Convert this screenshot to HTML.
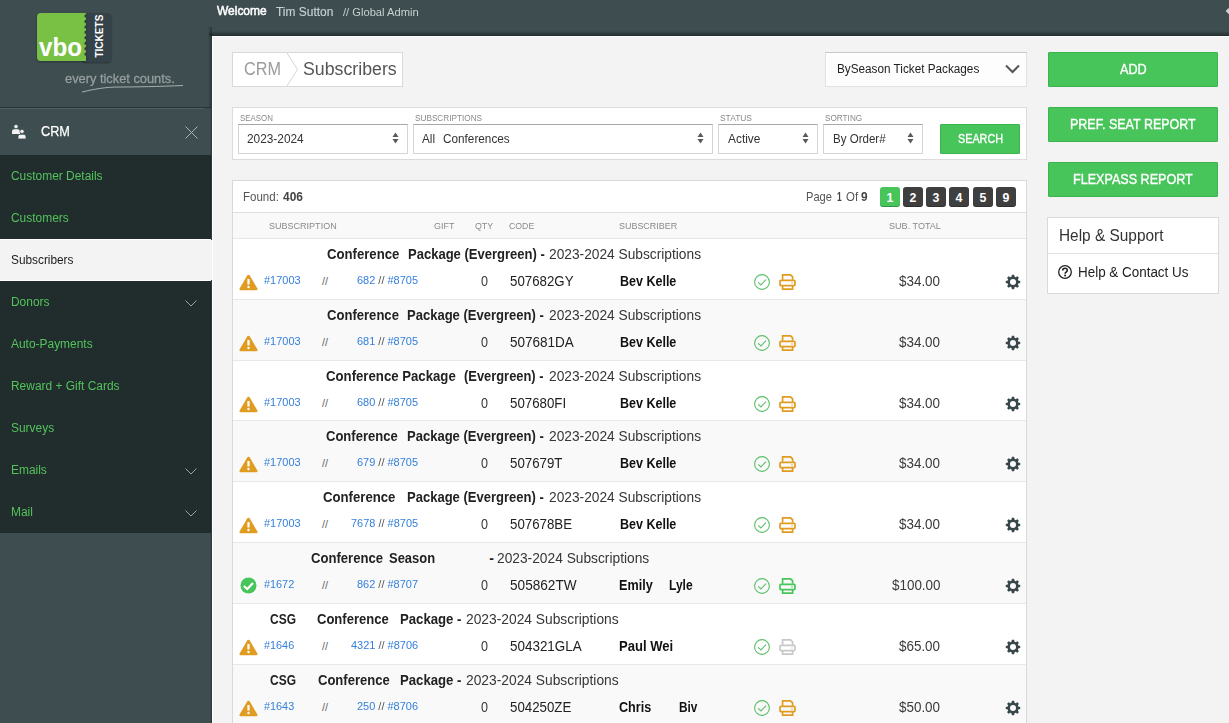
<!DOCTYPE html>
<html><head><meta charset="utf-8"><title>Subscribers</title>
<style>
html,body{margin:0;padding:0;width:1229px;height:723px;overflow:hidden;background:#3d4d50;}
body{position:relative;font-family:"Liberation Sans",sans-serif;}
.t{position:absolute;line-height:1;white-space:nowrap;}
.b{position:absolute;}
</style></head><body>
<div class="b" style="left:0px;top:0px;width:1229px;height:723px;background:#3d4d50"></div>
<div class="t" style="left:217.20px;top:6.00px;font-size:11.92px;color:#ffffff;font-weight:400;transform:scaleX(1.0050);transform-origin:0 0;-webkit-text-stroke:0.5px #fff;">Welcome</div>
<div class="t" style="left:276.20px;top:6.00px;font-size:12.50px;color:#c8d2d4;font-weight:400;transform:scaleX(0.9554);transform-origin:0 0;-webkit-text-stroke:0.15px #c8d2d4;">Tim Sutton</div>
<div class="t" style="left:343.40px;top:7.00px;font-size:11.34px;color:#c9d1d1;font-weight:400;transform:scaleX(0.9847);transform-origin:0 0;">// Global Admin</div>
<svg class="b" style="left:1225px;top:7px" width="4" height="8" viewBox="0 0 4 8"><path d="M4,0.8 L0.6,4 L4,7.2 z" fill="#c9d0d6"/></svg>
<svg class="b" style="left:30px;top:5px" width="90" height="65" viewBox="0 0 90 65">
<defs><filter id="sh" x="-20%" y="-20%" width="140%" height="140%"><feDropShadow dx="0" dy="1" stdDeviation="1" flood-color="#000" flood-opacity="0.35"/></filter></defs>
<rect x="52" y="8" width="29" height="49" rx="4" fill="#34434a" filter="url(#sh)"/>
<path d="M11,8 H56 V9.30 A1.7,1.7 0 0 0 56,12.70 V14.75 A1.7,1.7 0 0 0 56,18.15 V20.20 A1.7,1.7 0 0 0 56,23.60 V25.65 A1.7,1.7 0 0 0 56,29.05 V31.10 A1.7,1.7 0 0 0 56,34.50 V36.55 A1.7,1.7 0 0 0 56,39.95 V42.00 A1.7,1.7 0 0 0 56,45.40 V47.45 A1.7,1.7 0 0 0 56,50.85 V56 H11 a4,4 0 0 1 -4,-4 V12 a4,4 0 0 1 4,-4 z" fill="#78c144" filter="url(#sh)"/>
<text x="9.1" y="50.9" font-family="Liberation Sans" font-weight="700" font-size="26.5" fill="#fff" textLength="43" lengthAdjust="spacingAndGlyphs">vbo</text>
<text transform="translate(73.2,52.6) rotate(-90)" font-family="Liberation Sans" font-weight="700" font-size="11.6" fill="#fff" textLength="43" lengthAdjust="spacingAndGlyphs">TICKETS</text>
</svg>
<div class="t" style="left:65.30px;top:72.00px;font-size:13.20px;color:#959e9e;font-weight:400;transform:scaleX(0.9727);transform-origin:0 0;-webkit-text-stroke:0.3px #959e9e;">every ticket counts.</div>
<svg class="b" style="left:80px;top:84px" width="105" height="10" viewBox="0 0 105 10"><path d="M2,8 C15,5 25,3 40,3 S80,2.5 103,1.5" stroke="#a9b0b0" stroke-width="1" fill="none"/></svg>
<div class="b" style="left:0px;top:107px;width:211px;height:1px;background:rgba(0,0,0,0.3)"></div>
<div class="b" style="left:0px;top:108px;width:204px;height:1px;background:#4f5f62"></div>
<svg class="b" style="left:10px;top:122px" width="20" height="20" viewBox="0 0 20 20" fill="#f2f2f2">
<circle cx="6" cy="4.6" r="2.1" stroke="#3d4d50" stroke-width="0.6"/><path d="M2,12 v-2.5 q0,-2.2 2.2,-2.2 h3.6 q2.2,0 2.2,2.2 v2.5 z"/>
<circle cx="12" cy="9.5" r="2.1" stroke="#3d4d50" stroke-width="0.6"/><path d="M8,17 v-2.5 q0,-2.2 2.2,-2.2 h3.6 q2.2,0 2.2,2.2 v2.5 z" stroke="#3d4d50" stroke-width="0.8"/>
</svg>
<div class="t" style="left:41.00px;top:124.00px;font-size:14.53px;color:#ffffff;font-weight:400;transform:scaleX(0.8762);transform-origin:0 0;-webkit-text-stroke:0.25px #fff;">CRM</div>
<svg class="b" style="left:185px;top:126px" width="13" height="13" viewBox="0 0 13 13"><path d="M0.5,0.5 L12.5,12.5 M12.5,0.5 L0.5,12.5" stroke="#aab2b2" stroke-width="1"/></svg>
<div class="b" style="left:0px;top:155px;width:211px;height:378px;background:#212c2d"></div>
<div class="t" style="left:11.40px;top:169.00px;font-size:13.08px;color:#53c35c;font-weight:400;transform:scaleX(0.9131);transform-origin:0 0;">Customer Details</div>
<div class="t" style="left:11.40px;top:211.00px;font-size:13.08px;color:#53c35c;font-weight:400;transform:scaleX(0.9131);transform-origin:0 0;">Customers</div>
<div class="b" style="left:0px;top:239px;width:211px;height:42px;background:#f3f3f3;border-top:1px solid #fff;border-bottom:1px solid #fff;box-sizing:border-box"></div>
<div class="t" style="left:11.40px;top:253.00px;font-size:13.08px;color:#1a1a1a;font-weight:400;transform:scaleX(0.9049);transform-origin:0 0;">Subscribers</div>
<div class="t" style="left:11.40px;top:295.00px;font-size:13.08px;color:#53c35c;font-weight:400;transform:scaleX(0.9131);transform-origin:0 0;">Donors</div>
<svg class="b" style="left:185px;top:300px" width="12" height="7" viewBox="0 0 12 7"><path d="M0.5,0.5 L6,6 L11.5,0.5" stroke="#9aa2a2" stroke-width="1" fill="none"/></svg>
<div class="t" style="left:11.40px;top:337.00px;font-size:13.08px;color:#53c35c;font-weight:400;transform:scaleX(0.9131);transform-origin:0 0;">Auto-Payments</div>
<div class="t" style="left:11.40px;top:379.00px;font-size:13.08px;color:#53c35c;font-weight:400;transform:scaleX(0.9131);transform-origin:0 0;">Reward + Gift Cards</div>
<div class="t" style="left:11.40px;top:421.00px;font-size:13.08px;color:#53c35c;font-weight:400;transform:scaleX(0.9131);transform-origin:0 0;">Surveys</div>
<div class="t" style="left:11.40px;top:463.00px;font-size:13.08px;color:#53c35c;font-weight:400;transform:scaleX(0.9131);transform-origin:0 0;">Emails</div>
<svg class="b" style="left:185px;top:468px" width="12" height="7" viewBox="0 0 12 7"><path d="M0.5,0.5 L6,6 L11.5,0.5" stroke="#9aa2a2" stroke-width="1" fill="none"/></svg>
<div class="t" style="left:11.40px;top:505.00px;font-size:13.08px;color:#53c35c;font-weight:400;transform:scaleX(0.9131);transform-origin:0 0;">Mail</div>
<svg class="b" style="left:185px;top:510px" width="12" height="7" viewBox="0 0 12 7"><path d="M0.5,0.5 L6,6 L11.5,0.5" stroke="#9aa2a2" stroke-width="1" fill="none"/></svg>
<div class="b" style="left:208px;top:27px;width:4px;height:81px;background:linear-gradient(to right, rgba(0,0,0,0), rgba(0,0,0,0.32))"></div>
<div class="b" style="left:210px;top:108px;width:2px;height:615px;background:linear-gradient(to right, rgba(0,0,0,0), rgba(0,0,0,0.32))"></div>
<div class="b" style="left:210px;top:240px;width:2px;height:40px;background:#f3f3f3"></div>
<div class="b" style="left:209px;top:31px;width:1020px;height:5px;background:linear-gradient(to bottom, rgba(0,0,0,0), rgba(0,0,0,0.42))"></div>
<div class="b" style="left:212px;top:36px;width:1017px;height:687px;background:#f3f3f3;border-left:1px solid #fff;border-top:1px solid #fff;box-sizing:border-box"></div>
<div class="b" style="left:232px;top:52px;width:171px;height:35px;background:#fff;border:1px solid #d9d9d9;box-sizing:border-box"></div>
<svg class="b" style="left:286px;top:53px" width="13" height="33" viewBox="0 0 13 33"><path d="M1,0 L11.5,16.5 L1,33" stroke="#d5d5d5" stroke-width="1" fill="none"/></svg>
<div class="t" style="left:243.70px;top:60.00px;font-size:18.90px;color:#9c9c9c;font-weight:400;transform:scaleX(0.8600);transform-origin:0 0;">CRM</div>
<div class="t" style="left:303.00px;top:60.00px;font-size:18.90px;color:#555;font-weight:400;transform:scaleX(0.9392);transform-origin:0 0;">Subscribers</div>
<div class="b" style="left:825px;top:52px;width:202px;height:35px;background:#fdfdfd;border:1px solid #dde3e6;border-top-color:#c9c9c9;box-sizing:border-box"></div>
<div class="t" style="left:836.50px;top:62.00px;font-size:13.52px;color:#222;font-weight:400;transform:scaleX(0.8687);transform-origin:0 0;">BySeason Ticket Packages</div>
<svg class="b" style="left:1005px;top:64px" width="15" height="10" viewBox="0 0 15 10"><path d="M1,1.5 L7.5,8 L14,1.5" stroke="#555" stroke-width="2" fill="none"/></svg>
<div class="b" style="left:232px;top:107px;width:795px;height:53px;background:#fff;border:1px solid #dcdcdc;box-sizing:border-box"></div>
<div class="t" style="left:240.00px;top:113.00px;font-size:9.74px;color:#8a8a8a;font-weight:400;transform:scaleX(0.8130);transform-origin:0 0;">SEASON</div>
<div class="b" style="left:238px;top:124px;width:170px;height:30px;background:#fff;border:1px solid #d5d5d5;border-top:1px solid #a8a8a8;box-sizing:border-box"></div>
<svg class="b" style="left:391.5px;top:132px" width="7" height="12" viewBox="0 0 7 12"><path d="M3.5,0.5 L6.5,5 H0.5 z M0.5,7 H6.5 L3.5,11.5 z" fill="#5a5a5a"/></svg>
<div class="t" style="left:415.20px;top:113.00px;font-size:9.74px;color:#8a8a8a;font-weight:400;transform:scaleX(0.8436);transform-origin:0 0;">SUBSCRIPTIONS</div>
<div class="b" style="left:413px;top:124px;width:300px;height:30px;background:#fff;border:1px solid #d5d5d5;border-top:1px solid #a8a8a8;box-sizing:border-box"></div>
<svg class="b" style="left:696.5px;top:132px" width="7" height="12" viewBox="0 0 7 12"><path d="M3.5,0.5 L6.5,5 H0.5 z M0.5,7 H6.5 L3.5,11.5 z" fill="#5a5a5a"/></svg>
<div class="t" style="left:720.20px;top:113.00px;font-size:9.74px;color:#8a8a8a;font-weight:400;transform:scaleX(0.8656);transform-origin:0 0;">STATUS</div>
<div class="b" style="left:718px;top:124px;width:100px;height:30px;background:#fff;border:1px solid #d5d5d5;border-top:1px solid #a8a8a8;box-sizing:border-box"></div>
<svg class="b" style="left:801.5px;top:132px" width="7" height="12" viewBox="0 0 7 12"><path d="M3.5,0.5 L6.5,5 H0.5 z M0.5,7 H6.5 L3.5,11.5 z" fill="#5a5a5a"/></svg>
<div class="t" style="left:824.90px;top:113.00px;font-size:9.74px;color:#8a8a8a;font-weight:400;transform:scaleX(0.8418);transform-origin:0 0;">SORTING</div>
<div class="b" style="left:823px;top:124px;width:100px;height:30px;background:#fff;border:1px solid #d5d5d5;border-top:1px solid #a8a8a8;box-sizing:border-box"></div>
<svg class="b" style="left:906.5px;top:132px" width="7" height="12" viewBox="0 0 7 12"><path d="M3.5,0.5 L6.5,5 H0.5 z M0.5,7 H6.5 L3.5,11.5 z" fill="#5a5a5a"/></svg>
<div class="t" style="left:247.30px;top:133.00px;font-size:12.65px;color:#333;font-weight:400;transform:scaleX(0.9377);transform-origin:0 0;">2023-2024</div>
<div class="t" style="left:422.10px;top:133.00px;font-size:12.65px;color:#333;font-weight:400;transform:scaleX(0.9253);transform-origin:0 0;">All</div>
<div class="t" style="left:442.60px;top:133.00px;font-size:12.65px;color:#333;font-weight:400;transform:scaleX(0.9303);transform-origin:0 0;">Conferences</div>
<div class="t" style="left:727.70px;top:133.00px;font-size:12.65px;color:#333;font-weight:400;transform:scaleX(0.9410);transform-origin:0 0;">Active</div>
<div class="t" style="left:832.50px;top:133.00px;font-size:12.65px;color:#333;font-weight:400;transform:scaleX(0.9128);transform-origin:0 0;">By Order#</div>
<div class="b" style="left:940px;top:124px;width:80px;height:30px;background:#47c45a;border:1px solid #3db350;box-sizing:border-box;border-radius:1px"></div>
<div class="t" style="left:957.50px;top:133.00px;font-size:12.94px;color:#fff;font-weight:400;transform:scaleX(0.8346);transform-origin:0 0;-webkit-text-stroke:0.35px #fff;">SEARCH</div>
<div class="b" style="left:1048px;top:52px;width:170px;height:35px;background:#47c45a;border:1px solid #3db350;box-sizing:border-box;border-radius:1px"></div>
<div class="t" style="left:1119.70px;top:62.00px;font-size:14.10px;color:#fff;font-weight:400;transform:scaleX(0.8971);transform-origin:0 0;-webkit-text-stroke:0.35px #fff;">ADD</div>
<div class="b" style="left:1048px;top:107px;width:170px;height:35px;background:#47c45a;border:1px solid #3db350;box-sizing:border-box;border-radius:1px"></div>
<div class="t" style="left:1070.30px;top:117.00px;font-size:14.10px;color:#fff;font-weight:400;transform:scaleX(0.8871);transform-origin:0 0;-webkit-text-stroke:0.35px #fff;">PREF. SEAT REPORT</div>
<div class="b" style="left:1048px;top:162px;width:170px;height:35px;background:#47c45a;border:1px solid #3db350;box-sizing:border-box;border-radius:1px"></div>
<div class="t" style="left:1073.20px;top:172.00px;font-size:14.10px;color:#fff;font-weight:400;transform:scaleX(0.8924);transform-origin:0 0;-webkit-text-stroke:0.35px #fff;">FLEXPASS REPORT</div>
<div class="b" style="left:1047px;top:217px;width:172px;height:77px;background:#fff;border:1px solid #dadada;box-sizing:border-box"></div>
<div class="b" style="left:1048px;top:253px;width:170px;height:1px;background:#e0e0e0"></div>
<div class="t" style="left:1058.50px;top:228.00px;font-size:16.72px;color:#333;font-weight:400;transform:scaleX(0.9218);transform-origin:0 0;">Help &amp; Support</div>
<svg class="b" style="left:1058px;top:265px" width="14" height="14" viewBox="0 0 14 14"><circle cx="7" cy="7" r="6.3" stroke="#222" stroke-width="1.3" fill="none"/><path d="M4.7,5.5 q0,-2.3 2.3,-2.3 q2.3,0 2.3,2.1 q0,1.2 -1.3,1.9 q-0.9,0.5 -0.9,1.6" stroke="#222" stroke-width="1.6" fill="none"/><circle cx="7.1" cy="10.6" r="1" fill="#222"/></svg>
<div class="t" style="left:1078.40px;top:265.00px;font-size:14.53px;color:#222;font-weight:400;transform:scaleX(0.9250);transform-origin:0 0;">Help &amp; Contact Us</div>
<div class="b" style="left:232px;top:180px;width:795px;height:543px;background:#fff;border:1px solid #d9d9d9;border-bottom:none;box-sizing:border-box"></div>
<div class="b" style="left:233px;top:212px;width:793px;height:1px;background:#dedede"></div>
<div class="b" style="left:233px;top:213px;width:793px;height:25px;background:#f9f9f9"></div>
<div class="b" style="left:233px;top:238px;width:793px;height:1px;background:#e6e6e6"></div>
<div class="t" style="left:243.30px;top:191.00px;font-size:12.65px;color:#555;font-weight:400;transform:scaleX(0.9120);transform-origin:0 0;">Found:</div>
<div class="t" style="left:282.60px;top:191.00px;font-size:12.65px;color:#444;font-weight:700;transform:scaleX(0.9435);transform-origin:0 0;">406</div>
<div class="t" style="left:806.20px;top:191.00px;font-size:12.79px;color:#555;font-weight:400;transform:scaleX(0.8705);transform-origin:0 0;">Page</div>
<div class="t" style="left:836.50px;top:191.00px;font-size:12.79px;color:#444;font-weight:700;transform:scaleX(0.6609);transform-origin:0 0;">1</div>
<div class="t" style="left:845.90px;top:191.00px;font-size:12.79px;color:#555;font-weight:400;transform:scaleX(0.8941);transform-origin:0 0;">Of</div>
<div class="t" style="left:860.80px;top:191.00px;font-size:12.79px;color:#444;font-weight:700;transform:scaleX(0.9281);transform-origin:0 0;">9</div>
<div class="b" style="left:880px;top:187px;width:20px;height:20px;background:#47c45a;border-radius:3px;box-shadow:inset 0 -1px 0 rgba(0,0,0,0.25)"></div>
<div class="t" style="left:886.57px;top:192.00px;font-size:12.35px;color:#fff;font-weight:700;">1</div>
<div class="b" style="left:903px;top:187px;width:20px;height:20px;background:#3f3f3f;border-radius:3px;box-shadow:inset 0 -1px 0 rgba(0,0,0,0.25)"></div>
<div class="t" style="left:909.57px;top:192.00px;font-size:12.35px;color:#fff;font-weight:700;">2</div>
<div class="b" style="left:926px;top:187px;width:20px;height:20px;background:#3f3f3f;border-radius:3px;box-shadow:inset 0 -1px 0 rgba(0,0,0,0.25)"></div>
<div class="t" style="left:932.57px;top:192.00px;font-size:12.35px;color:#fff;font-weight:700;">3</div>
<div class="b" style="left:949px;top:187px;width:20px;height:20px;background:#3f3f3f;border-radius:3px;box-shadow:inset 0 -1px 0 rgba(0,0,0,0.25)"></div>
<div class="t" style="left:955.57px;top:192.00px;font-size:12.35px;color:#fff;font-weight:700;">4</div>
<div class="b" style="left:973px;top:187px;width:20px;height:20px;background:#3f3f3f;border-radius:3px;box-shadow:inset 0 -1px 0 rgba(0,0,0,0.25)"></div>
<div class="t" style="left:979.57px;top:192.00px;font-size:12.35px;color:#fff;font-weight:700;">5</div>
<div class="b" style="left:996px;top:187px;width:20px;height:20px;background:#3f3f3f;border-radius:3px;box-shadow:inset 0 -1px 0 rgba(0,0,0,0.25)"></div>
<div class="t" style="left:1002.57px;top:192.00px;font-size:12.35px;color:#fff;font-weight:700;">9</div>
<div class="t" style="left:269.30px;top:221.00px;font-size:9.74px;color:#8a8a8a;font-weight:400;transform:scaleX(0.9268);transform-origin:0 0;">SUBSCRIPTION</div>
<div class="t" style="left:433.60px;top:221.00px;font-size:9.74px;color:#8a8a8a;font-weight:400;transform:scaleX(0.9200);transform-origin:0 0;">GIFT</div>
<div class="t" style="left:474.90px;top:221.00px;font-size:9.74px;color:#8a8a8a;font-weight:400;transform:scaleX(0.9040);transform-origin:0 0;">QTY</div>
<div class="t" style="left:509.00px;top:221.00px;font-size:9.74px;color:#8a8a8a;font-weight:400;transform:scaleX(0.8957);transform-origin:0 0;">CODE</div>
<div class="t" style="left:618.80px;top:221.00px;font-size:9.74px;color:#8a8a8a;font-weight:400;transform:scaleX(0.9192);transform-origin:0 0;">SUBSCRIBER</div>
<div class="t" style="left:888.50px;top:221.00px;font-size:9.74px;color:#8a8a8a;font-weight:400;transform:scaleX(0.9311);transform-origin:0 0;">SUB. TOTAL</div>
<div class="b" style="left:233px;top:239px;width:793px;height:60px;background:#ffffff"></div>
<div class="b" style="left:233px;top:299px;width:793px;height:1px;background:#e8e8e8"></div>
<div class="t" style="left:327.20px;top:248.00px;font-size:13.95px;color:#222;font-weight:700;transform:scaleX(0.9431);transform-origin:0 0;">Conference</div>
<div class="t" style="left:407.50px;top:248.00px;font-size:13.95px;color:#222;font-weight:700;transform:scaleX(0.9346);transform-origin:0 0;">Package (Evergreen) -</div>
<div class="t" style="left:548.80px;top:248.00px;font-size:13.95px;color:#363636;font-weight:400;transform:scaleX(0.9860);transform-origin:0 0;">2023-2024 Subscriptions</div>
<svg class="b" style="left:239px;top:274px" width="19" height="17" viewBox="0 0 19 17"><path d="M9.5,0.8 Q10.3,0.8 10.8,1.6 L18.4,14.6 Q19,15.9 17.6,16.2 H1.4 Q0,15.9 0.6,14.6 L8.2,1.6 Q8.7,0.8 9.5,0.8 z" fill="#e09c21"/><path d="M9.5,5 V10.5" stroke="#fff" stroke-width="2.2"/><circle cx="9.5" cy="13" r="1.2" fill="#fff"/></svg>
<div class="t" style="left:264.30px;top:275.00px;font-size:11.19px;color:#3580dc;font-weight:400;transform:scaleX(0.9800);transform-origin:0 0;">#17003</div>
<div class="t" style="left:322.00px;top:276.00px;font-size:10.90px;color:#666;font-weight:400;">//</div>
<div class="t" style="left:357.10px;top:275.00px;font-size:11.19px;color:#3580dc;font-weight:400;transform:scaleX(0.9801);transform-origin:0 0;">682 <span style='color:#555'>//</span> #8705</div>
<div class="t" style="left:481.00px;top:274.00px;font-size:14.53px;color:#3a3a3a;font-weight:400;transform:scaleX(0.8662);transform-origin:0 0;">0</div>
<div class="t" style="left:509.70px;top:274.00px;font-size:14.53px;color:#222;font-weight:400;transform:scaleX(0.9150);transform-origin:0 0;">507682GY</div>
<div class="t" style="left:619.60px;top:274.00px;font-size:14.53px;color:#111;font-weight:700;transform:scaleX(0.8619);transform-origin:0 0;">Bev Kelle</div>
<svg class="b" style="left:754px;top:274px" width="17" height="17" viewBox="0 0 17 17"><circle cx="8" cy="8" r="7.4" stroke="#5cbf68" stroke-width="1.1" fill="none"/><path d="M4.2,8.3 L6.9,10.9 L12,5.6" stroke="#5cbf68" stroke-width="1.1" fill="none"/></svg>
<svg class="b" style="left:779px;top:274px" width="17" height="17" viewBox="0 0 17 17"><path d="M3.6,5.8 V0.9 H11.6 L13.6,2.9 V5.8" stroke="#e09c21" stroke-width="1.7" fill="none"/><rect x="1" y="6.3" width="15" height="5.3" rx="1" stroke="#e09c21" stroke-width="1.7" fill="none"/><path d="M3.6,11.6 V15.2 H13.6 V11.6" stroke="#e09c21" stroke-width="1.7" fill="none"/><circle cx="13" cy="9" r="0.7" fill="#e09c21"/></svg>
<div class="t" style="left:899.40px;top:274.00px;font-size:14.53px;color:#3a3a3a;font-weight:400;transform:scaleX(0.9244);transform-origin:0 0;">$34.00</div>
<svg class="b" style="left:1005px;top:274px" width="16" height="16" viewBox="0 0 16 16"><path fill="#37474a" fill-rule="evenodd" d="M6.39,2.74 L6.92,0.78 L9.08,0.78 L9.61,2.74 L10.58,3.14 L12.34,2.13 L13.87,3.66 L12.86,5.42 L13.26,6.39 L15.22,6.92 L15.22,9.08 L13.26,9.61 L12.86,10.58 L13.87,12.34 L12.34,13.87 L10.58,12.86 L9.61,13.26 L9.08,15.22 L6.92,15.22 L6.39,13.26 L5.42,12.86 L3.66,13.87 L2.13,12.34 L3.14,10.58 L2.74,9.61 L0.78,9.08 L0.78,6.92 L2.74,6.39 L3.14,5.42 L2.13,3.66 L3.66,2.13 L5.42,3.14 Z M8,5.0 A3,3 0 1 0 8,11 A3,3 0 1 0 8,5.0 Z"/></svg>
<div class="b" style="left:233px;top:300px;width:793px;height:60px;background:#f9f9f9"></div>
<div class="b" style="left:233px;top:360px;width:793px;height:1px;background:#e8e8e8"></div>
<div class="t" style="left:327.30px;top:309.00px;font-size:13.95px;color:#222;font-weight:700;transform:scaleX(0.9378);transform-origin:0 0;">Conference</div>
<div class="t" style="left:407.00px;top:309.00px;font-size:13.95px;color:#222;font-weight:700;transform:scaleX(0.9346);transform-origin:0 0;">Package (Evergreen) -</div>
<div class="t" style="left:548.80px;top:309.00px;font-size:13.95px;color:#363636;font-weight:400;transform:scaleX(0.9860);transform-origin:0 0;">2023-2024 Subscriptions</div>
<svg class="b" style="left:239px;top:335px" width="19" height="17" viewBox="0 0 19 17"><path d="M9.5,0.8 Q10.3,0.8 10.8,1.6 L18.4,14.6 Q19,15.9 17.6,16.2 H1.4 Q0,15.9 0.6,14.6 L8.2,1.6 Q8.7,0.8 9.5,0.8 z" fill="#e09c21"/><path d="M9.5,5 V10.5" stroke="#fff" stroke-width="2.2"/><circle cx="9.5" cy="13" r="1.2" fill="#fff"/></svg>
<div class="t" style="left:264.30px;top:336.00px;font-size:11.19px;color:#3580dc;font-weight:400;transform:scaleX(0.9800);transform-origin:0 0;">#17003</div>
<div class="t" style="left:322.00px;top:337.00px;font-size:10.90px;color:#666;font-weight:400;">//</div>
<div class="t" style="left:357.10px;top:336.00px;font-size:11.19px;color:#3580dc;font-weight:400;transform:scaleX(0.9801);transform-origin:0 0;">681 <span style='color:#555'>//</span> #8705</div>
<div class="t" style="left:481.00px;top:335.00px;font-size:14.53px;color:#3a3a3a;font-weight:400;transform:scaleX(0.8662);transform-origin:0 0;">0</div>
<div class="t" style="left:509.70px;top:335.00px;font-size:14.53px;color:#222;font-weight:400;transform:scaleX(0.9302);transform-origin:0 0;">507681DA</div>
<div class="t" style="left:619.60px;top:335.00px;font-size:14.53px;color:#111;font-weight:700;transform:scaleX(0.8619);transform-origin:0 0;">Bev Kelle</div>
<svg class="b" style="left:754px;top:335px" width="17" height="17" viewBox="0 0 17 17"><circle cx="8" cy="8" r="7.4" stroke="#5cbf68" stroke-width="1.1" fill="none"/><path d="M4.2,8.3 L6.9,10.9 L12,5.6" stroke="#5cbf68" stroke-width="1.1" fill="none"/></svg>
<svg class="b" style="left:779px;top:335px" width="17" height="17" viewBox="0 0 17 17"><path d="M3.6,5.8 V0.9 H11.6 L13.6,2.9 V5.8" stroke="#e09c21" stroke-width="1.7" fill="none"/><rect x="1" y="6.3" width="15" height="5.3" rx="1" stroke="#e09c21" stroke-width="1.7" fill="none"/><path d="M3.6,11.6 V15.2 H13.6 V11.6" stroke="#e09c21" stroke-width="1.7" fill="none"/><circle cx="13" cy="9" r="0.7" fill="#e09c21"/></svg>
<div class="t" style="left:899.40px;top:335.00px;font-size:14.53px;color:#3a3a3a;font-weight:400;transform:scaleX(0.9244);transform-origin:0 0;">$34.00</div>
<svg class="b" style="left:1005px;top:335px" width="16" height="16" viewBox="0 0 16 16"><path fill="#37474a" fill-rule="evenodd" d="M6.39,2.74 L6.92,0.78 L9.08,0.78 L9.61,2.74 L10.58,3.14 L12.34,2.13 L13.87,3.66 L12.86,5.42 L13.26,6.39 L15.22,6.92 L15.22,9.08 L13.26,9.61 L12.86,10.58 L13.87,12.34 L12.34,13.87 L10.58,12.86 L9.61,13.26 L9.08,15.22 L6.92,15.22 L6.39,13.26 L5.42,12.86 L3.66,13.87 L2.13,12.34 L3.14,10.58 L2.74,9.61 L0.78,9.08 L0.78,6.92 L2.74,6.39 L3.14,5.42 L2.13,3.66 L3.66,2.13 L5.42,3.14 Z M8,5.0 A3,3 0 1 0 8,11 A3,3 0 1 0 8,5.0 Z"/></svg>
<div class="b" style="left:233px;top:361px;width:793px;height:59px;background:#ffffff"></div>
<div class="b" style="left:233px;top:420px;width:793px;height:1px;background:#e8e8e8"></div>
<div class="t" style="left:326.30px;top:370.00px;font-size:13.95px;color:#222;font-weight:700;transform:scaleX(0.9463);transform-origin:0 0;">Conference Package</div>
<div class="t" style="left:464.40px;top:370.00px;font-size:13.95px;color:#222;font-weight:700;transform:scaleX(0.9247);transform-origin:0 0;">(Evergreen) -</div>
<div class="t" style="left:548.80px;top:370.00px;font-size:13.95px;color:#363636;font-weight:400;transform:scaleX(0.9860);transform-origin:0 0;">2023-2024 Subscriptions</div>
<svg class="b" style="left:239px;top:396px" width="19" height="17" viewBox="0 0 19 17"><path d="M9.5,0.8 Q10.3,0.8 10.8,1.6 L18.4,14.6 Q19,15.9 17.6,16.2 H1.4 Q0,15.9 0.6,14.6 L8.2,1.6 Q8.7,0.8 9.5,0.8 z" fill="#e09c21"/><path d="M9.5,5 V10.5" stroke="#fff" stroke-width="2.2"/><circle cx="9.5" cy="13" r="1.2" fill="#fff"/></svg>
<div class="t" style="left:264.30px;top:397.00px;font-size:11.19px;color:#3580dc;font-weight:400;transform:scaleX(0.9800);transform-origin:0 0;">#17003</div>
<div class="t" style="left:322.00px;top:398.00px;font-size:10.90px;color:#666;font-weight:400;">//</div>
<div class="t" style="left:357.10px;top:397.00px;font-size:11.19px;color:#3580dc;font-weight:400;transform:scaleX(0.9801);transform-origin:0 0;">680 <span style='color:#555'>//</span> #8705</div>
<div class="t" style="left:481.00px;top:396.00px;font-size:14.53px;color:#3a3a3a;font-weight:400;transform:scaleX(0.8662);transform-origin:0 0;">0</div>
<div class="t" style="left:509.70px;top:396.00px;font-size:14.53px;color:#222;font-weight:400;transform:scaleX(0.9150);transform-origin:0 0;">507680FI</div>
<div class="t" style="left:619.60px;top:396.00px;font-size:14.53px;color:#111;font-weight:700;transform:scaleX(0.8619);transform-origin:0 0;">Bev Kelle</div>
<svg class="b" style="left:754px;top:396px" width="17" height="17" viewBox="0 0 17 17"><circle cx="8" cy="8" r="7.4" stroke="#5cbf68" stroke-width="1.1" fill="none"/><path d="M4.2,8.3 L6.9,10.9 L12,5.6" stroke="#5cbf68" stroke-width="1.1" fill="none"/></svg>
<svg class="b" style="left:779px;top:396px" width="17" height="17" viewBox="0 0 17 17"><path d="M3.6,5.8 V0.9 H11.6 L13.6,2.9 V5.8" stroke="#e09c21" stroke-width="1.7" fill="none"/><rect x="1" y="6.3" width="15" height="5.3" rx="1" stroke="#e09c21" stroke-width="1.7" fill="none"/><path d="M3.6,11.6 V15.2 H13.6 V11.6" stroke="#e09c21" stroke-width="1.7" fill="none"/><circle cx="13" cy="9" r="0.7" fill="#e09c21"/></svg>
<div class="t" style="left:899.40px;top:396.00px;font-size:14.53px;color:#3a3a3a;font-weight:400;transform:scaleX(0.9244);transform-origin:0 0;">$34.00</div>
<svg class="b" style="left:1005px;top:396px" width="16" height="16" viewBox="0 0 16 16"><path fill="#37474a" fill-rule="evenodd" d="M6.39,2.74 L6.92,0.78 L9.08,0.78 L9.61,2.74 L10.58,3.14 L12.34,2.13 L13.87,3.66 L12.86,5.42 L13.26,6.39 L15.22,6.92 L15.22,9.08 L13.26,9.61 L12.86,10.58 L13.87,12.34 L12.34,13.87 L10.58,12.86 L9.61,13.26 L9.08,15.22 L6.92,15.22 L6.39,13.26 L5.42,12.86 L3.66,13.87 L2.13,12.34 L3.14,10.58 L2.74,9.61 L0.78,9.08 L0.78,6.92 L2.74,6.39 L3.14,5.42 L2.13,3.66 L3.66,2.13 L5.42,3.14 Z M8,5.0 A3,3 0 1 0 8,11 A3,3 0 1 0 8,5.0 Z"/></svg>
<div class="b" style="left:233px;top:421px;width:793px;height:60px;background:#f9f9f9"></div>
<div class="b" style="left:233px;top:481px;width:793px;height:1px;background:#e8e8e8"></div>
<div class="t" style="left:325.60px;top:430.00px;font-size:13.95px;color:#222;font-weight:700;transform:scaleX(0.9352);transform-origin:0 0;">Conference</div>
<div class="t" style="left:407.00px;top:430.00px;font-size:13.95px;color:#222;font-weight:700;transform:scaleX(0.9346);transform-origin:0 0;">Package (Evergreen) -</div>
<div class="t" style="left:548.80px;top:430.00px;font-size:13.95px;color:#363636;font-weight:400;transform:scaleX(0.9860);transform-origin:0 0;">2023-2024 Subscriptions</div>
<svg class="b" style="left:239px;top:456px" width="19" height="17" viewBox="0 0 19 17"><path d="M9.5,0.8 Q10.3,0.8 10.8,1.6 L18.4,14.6 Q19,15.9 17.6,16.2 H1.4 Q0,15.9 0.6,14.6 L8.2,1.6 Q8.7,0.8 9.5,0.8 z" fill="#e09c21"/><path d="M9.5,5 V10.5" stroke="#fff" stroke-width="2.2"/><circle cx="9.5" cy="13" r="1.2" fill="#fff"/></svg>
<div class="t" style="left:264.30px;top:457.00px;font-size:11.19px;color:#3580dc;font-weight:400;transform:scaleX(0.9800);transform-origin:0 0;">#17003</div>
<div class="t" style="left:322.00px;top:458.00px;font-size:10.90px;color:#666;font-weight:400;">//</div>
<div class="t" style="left:357.10px;top:457.00px;font-size:11.19px;color:#3580dc;font-weight:400;transform:scaleX(0.9801);transform-origin:0 0;">679 <span style='color:#555'>//</span> #8705</div>
<div class="t" style="left:481.00px;top:456.00px;font-size:14.53px;color:#3a3a3a;font-weight:400;transform:scaleX(0.8662);transform-origin:0 0;">0</div>
<div class="t" style="left:509.70px;top:456.00px;font-size:14.53px;color:#222;font-weight:400;transform:scaleX(0.9150);transform-origin:0 0;">507679T</div>
<div class="t" style="left:619.60px;top:456.00px;font-size:14.53px;color:#111;font-weight:700;transform:scaleX(0.8619);transform-origin:0 0;">Bev Kelle</div>
<svg class="b" style="left:754px;top:456px" width="17" height="17" viewBox="0 0 17 17"><circle cx="8" cy="8" r="7.4" stroke="#5cbf68" stroke-width="1.1" fill="none"/><path d="M4.2,8.3 L6.9,10.9 L12,5.6" stroke="#5cbf68" stroke-width="1.1" fill="none"/></svg>
<svg class="b" style="left:779px;top:456px" width="17" height="17" viewBox="0 0 17 17"><path d="M3.6,5.8 V0.9 H11.6 L13.6,2.9 V5.8" stroke="#e09c21" stroke-width="1.7" fill="none"/><rect x="1" y="6.3" width="15" height="5.3" rx="1" stroke="#e09c21" stroke-width="1.7" fill="none"/><path d="M3.6,11.6 V15.2 H13.6 V11.6" stroke="#e09c21" stroke-width="1.7" fill="none"/><circle cx="13" cy="9" r="0.7" fill="#e09c21"/></svg>
<div class="t" style="left:899.40px;top:456.00px;font-size:14.53px;color:#3a3a3a;font-weight:400;transform:scaleX(0.9244);transform-origin:0 0;">$34.00</div>
<svg class="b" style="left:1005px;top:456px" width="16" height="16" viewBox="0 0 16 16"><path fill="#37474a" fill-rule="evenodd" d="M6.39,2.74 L6.92,0.78 L9.08,0.78 L9.61,2.74 L10.58,3.14 L12.34,2.13 L13.87,3.66 L12.86,5.42 L13.26,6.39 L15.22,6.92 L15.22,9.08 L13.26,9.61 L12.86,10.58 L13.87,12.34 L12.34,13.87 L10.58,12.86 L9.61,13.26 L9.08,15.22 L6.92,15.22 L6.39,13.26 L5.42,12.86 L3.66,13.87 L2.13,12.34 L3.14,10.58 L2.74,9.61 L0.78,9.08 L0.78,6.92 L2.74,6.39 L3.14,5.42 L2.13,3.66 L3.66,2.13 L5.42,3.14 Z M8,5.0 A3,3 0 1 0 8,11 A3,3 0 1 0 8,5.0 Z"/></svg>
<div class="b" style="left:233px;top:482px;width:793px;height:60px;background:#ffffff"></div>
<div class="b" style="left:233px;top:542px;width:793px;height:1px;background:#e8e8e8"></div>
<div class="t" style="left:323.20px;top:491.00px;font-size:13.95px;color:#222;font-weight:700;transform:scaleX(0.9444);transform-origin:0 0;">Conference</div>
<div class="t" style="left:407.00px;top:491.00px;font-size:13.95px;color:#222;font-weight:700;transform:scaleX(0.9346);transform-origin:0 0;">Package (Evergreen) -</div>
<div class="t" style="left:548.80px;top:491.00px;font-size:13.95px;color:#363636;font-weight:400;transform:scaleX(0.9860);transform-origin:0 0;">2023-2024 Subscriptions</div>
<svg class="b" style="left:239px;top:517px" width="19" height="17" viewBox="0 0 19 17"><path d="M9.5,0.8 Q10.3,0.8 10.8,1.6 L18.4,14.6 Q19,15.9 17.6,16.2 H1.4 Q0,15.9 0.6,14.6 L8.2,1.6 Q8.7,0.8 9.5,0.8 z" fill="#e09c21"/><path d="M9.5,5 V10.5" stroke="#fff" stroke-width="2.2"/><circle cx="9.5" cy="13" r="1.2" fill="#fff"/></svg>
<div class="t" style="left:264.30px;top:518.00px;font-size:11.19px;color:#3580dc;font-weight:400;transform:scaleX(0.9800);transform-origin:0 0;">#17003</div>
<div class="t" style="left:322.00px;top:519.00px;font-size:10.90px;color:#666;font-weight:400;">//</div>
<div class="t" style="left:351.00px;top:518.00px;font-size:11.19px;color:#3580dc;font-weight:400;transform:scaleX(0.9801);transform-origin:0 0;">7678 <span style='color:#555'>//</span> #8705</div>
<div class="t" style="left:481.00px;top:517.00px;font-size:14.53px;color:#3a3a3a;font-weight:400;transform:scaleX(0.8662);transform-origin:0 0;">0</div>
<div class="t" style="left:509.70px;top:517.00px;font-size:14.53px;color:#222;font-weight:400;transform:scaleX(0.9150);transform-origin:0 0;">507678BE</div>
<div class="t" style="left:619.60px;top:517.00px;font-size:14.53px;color:#111;font-weight:700;transform:scaleX(0.8619);transform-origin:0 0;">Bev Kelle</div>
<svg class="b" style="left:754px;top:517px" width="17" height="17" viewBox="0 0 17 17"><circle cx="8" cy="8" r="7.4" stroke="#5cbf68" stroke-width="1.1" fill="none"/><path d="M4.2,8.3 L6.9,10.9 L12,5.6" stroke="#5cbf68" stroke-width="1.1" fill="none"/></svg>
<svg class="b" style="left:779px;top:517px" width="17" height="17" viewBox="0 0 17 17"><path d="M3.6,5.8 V0.9 H11.6 L13.6,2.9 V5.8" stroke="#e09c21" stroke-width="1.7" fill="none"/><rect x="1" y="6.3" width="15" height="5.3" rx="1" stroke="#e09c21" stroke-width="1.7" fill="none"/><path d="M3.6,11.6 V15.2 H13.6 V11.6" stroke="#e09c21" stroke-width="1.7" fill="none"/><circle cx="13" cy="9" r="0.7" fill="#e09c21"/></svg>
<div class="t" style="left:899.40px;top:517.00px;font-size:14.53px;color:#3a3a3a;font-weight:400;transform:scaleX(0.9244);transform-origin:0 0;">$34.00</div>
<svg class="b" style="left:1005px;top:517px" width="16" height="16" viewBox="0 0 16 16"><path fill="#37474a" fill-rule="evenodd" d="M6.39,2.74 L6.92,0.78 L9.08,0.78 L9.61,2.74 L10.58,3.14 L12.34,2.13 L13.87,3.66 L12.86,5.42 L13.26,6.39 L15.22,6.92 L15.22,9.08 L13.26,9.61 L12.86,10.58 L13.87,12.34 L12.34,13.87 L10.58,12.86 L9.61,13.26 L9.08,15.22 L6.92,15.22 L6.39,13.26 L5.42,12.86 L3.66,13.87 L2.13,12.34 L3.14,10.58 L2.74,9.61 L0.78,9.08 L0.78,6.92 L2.74,6.39 L3.14,5.42 L2.13,3.66 L3.66,2.13 L5.42,3.14 Z M8,5.0 A3,3 0 1 0 8,11 A3,3 0 1 0 8,5.0 Z"/></svg>
<div class="b" style="left:233px;top:543px;width:793px;height:60px;background:#f9f9f9"></div>
<div class="b" style="left:233px;top:603px;width:793px;height:1px;background:#e8e8e8"></div>
<div class="t" style="left:310.50px;top:552.00px;font-size:13.95px;color:#222;font-weight:700;transform:scaleX(0.9391);transform-origin:0 0;">Conference</div>
<div class="t" style="left:389.40px;top:552.00px;font-size:13.95px;color:#222;font-weight:700;transform:scaleX(0.9308);transform-origin:0 0;">Season</div>
<div class="t" style="left:489.20px;top:552.00px;font-size:13.95px;color:#222;font-weight:700;">-</div>
<div class="t" style="left:496.80px;top:552.00px;font-size:13.95px;color:#363636;font-weight:400;transform:scaleX(0.9873);transform-origin:0 0;">2023-2024 Subscriptions</div>
<svg class="b" style="left:240px;top:577px" width="17" height="17" viewBox="0 0 17 17"><circle cx="8.5" cy="8.5" r="8" fill="#47c45a"/><path d="M3.8,9 L7.3,12 L13,6" stroke="#fff" stroke-width="2.2" fill="none"/></svg>
<div class="t" style="left:264.30px;top:579.00px;font-size:11.19px;color:#3580dc;font-weight:400;transform:scaleX(0.9703);transform-origin:0 0;">#1672</div>
<div class="t" style="left:322.00px;top:580.00px;font-size:10.90px;color:#666;font-weight:400;">//</div>
<div class="t" style="left:357.10px;top:579.00px;font-size:11.19px;color:#3580dc;font-weight:400;transform:scaleX(0.9801);transform-origin:0 0;">862 <span style='color:#555'>//</span> #8707</div>
<div class="t" style="left:481.00px;top:578.00px;font-size:14.53px;color:#3a3a3a;font-weight:400;transform:scaleX(0.8662);transform-origin:0 0;">0</div>
<div class="t" style="left:509.70px;top:578.00px;font-size:14.53px;color:#222;font-weight:400;transform:scaleX(0.9381);transform-origin:0 0;">505862TW</div>
<div class="t" style="left:619.00px;top:578.00px;font-size:14.53px;color:#111;font-weight:700;transform:scaleX(0.8690);transform-origin:0 0;">Emily</div>
<div class="t" style="left:669.40px;top:578.00px;font-size:14.53px;color:#111;font-weight:700;transform:scaleX(0.8302);transform-origin:0 0;">Lyle</div>
<svg class="b" style="left:754px;top:578px" width="17" height="17" viewBox="0 0 17 17"><circle cx="8" cy="8" r="7.4" stroke="#5cbf68" stroke-width="1.1" fill="none"/><path d="M4.2,8.3 L6.9,10.9 L12,5.6" stroke="#5cbf68" stroke-width="1.1" fill="none"/></svg>
<svg class="b" style="left:779px;top:578px" width="17" height="17" viewBox="0 0 17 17"><path d="M3.6,5.8 V0.9 H11.6 L13.6,2.9 V5.8" stroke="#47c45a" stroke-width="1.7" fill="none"/><rect x="1" y="6.3" width="15" height="5.3" rx="1" stroke="#47c45a" stroke-width="1.7" fill="none"/><path d="M3.6,11.6 V15.2 H13.6 V11.6" stroke="#47c45a" stroke-width="1.7" fill="none"/><circle cx="13" cy="9" r="0.7" fill="#47c45a"/></svg>
<div class="t" style="left:891.93px;top:578.00px;font-size:14.53px;color:#3a3a3a;font-weight:400;transform:scaleX(0.9244);transform-origin:0 0;">$100.00</div>
<svg class="b" style="left:1005px;top:578px" width="16" height="16" viewBox="0 0 16 16"><path fill="#37474a" fill-rule="evenodd" d="M6.39,2.74 L6.92,0.78 L9.08,0.78 L9.61,2.74 L10.58,3.14 L12.34,2.13 L13.87,3.66 L12.86,5.42 L13.26,6.39 L15.22,6.92 L15.22,9.08 L13.26,9.61 L12.86,10.58 L13.87,12.34 L12.34,13.87 L10.58,12.86 L9.61,13.26 L9.08,15.22 L6.92,15.22 L6.39,13.26 L5.42,12.86 L3.66,13.87 L2.13,12.34 L3.14,10.58 L2.74,9.61 L0.78,9.08 L0.78,6.92 L2.74,6.39 L3.14,5.42 L2.13,3.66 L3.66,2.13 L5.42,3.14 Z M8,5.0 A3,3 0 1 0 8,11 A3,3 0 1 0 8,5.0 Z"/></svg>
<div class="b" style="left:233px;top:604px;width:793px;height:60px;background:#ffffff"></div>
<div class="b" style="left:233px;top:664px;width:793px;height:1px;background:#e8e8e8"></div>
<div class="t" style="left:269.50px;top:613.00px;font-size:13.95px;color:#222;font-weight:700;transform:scaleX(0.8599);transform-origin:0 0;">CSG</div>
<div class="t" style="left:316.60px;top:613.00px;font-size:13.95px;color:#222;font-weight:700;transform:scaleX(0.9352);transform-origin:0 0;">Conference</div>
<div class="t" style="left:400.40px;top:613.00px;font-size:13.95px;color:#222;font-weight:700;transform:scaleX(0.9440);transform-origin:0 0;">Package -</div>
<div class="t" style="left:466.30px;top:613.00px;font-size:13.95px;color:#363636;font-weight:400;transform:scaleX(0.9898);transform-origin:0 0;">2023-2024 Subscriptions</div>
<svg class="b" style="left:239px;top:639px" width="19" height="17" viewBox="0 0 19 17"><path d="M9.5,0.8 Q10.3,0.8 10.8,1.6 L18.4,14.6 Q19,15.9 17.6,16.2 H1.4 Q0,15.9 0.6,14.6 L8.2,1.6 Q8.7,0.8 9.5,0.8 z" fill="#e09c21"/><path d="M9.5,5 V10.5" stroke="#fff" stroke-width="2.2"/><circle cx="9.5" cy="13" r="1.2" fill="#fff"/></svg>
<div class="t" style="left:264.30px;top:640.00px;font-size:11.19px;color:#3580dc;font-weight:400;transform:scaleX(0.9703);transform-origin:0 0;">#1646</div>
<div class="t" style="left:322.00px;top:641.00px;font-size:10.90px;color:#666;font-weight:400;">//</div>
<div class="t" style="left:351.00px;top:640.00px;font-size:11.19px;color:#3580dc;font-weight:400;transform:scaleX(0.9801);transform-origin:0 0;">4321 <span style='color:#555'>//</span> #8706</div>
<div class="t" style="left:481.00px;top:639.00px;font-size:14.53px;color:#3a3a3a;font-weight:400;transform:scaleX(0.8662);transform-origin:0 0;">0</div>
<div class="t" style="left:509.70px;top:639.00px;font-size:14.53px;color:#222;font-weight:400;transform:scaleX(0.9254);transform-origin:0 0;">504321GLA</div>
<div class="t" style="left:619.00px;top:639.00px;font-size:14.53px;color:#111;font-weight:700;transform:scaleX(0.8988);transform-origin:0 0;">Paul Wei</div>
<svg class="b" style="left:754px;top:639px" width="17" height="17" viewBox="0 0 17 17"><circle cx="8" cy="8" r="7.4" stroke="#5cbf68" stroke-width="1.1" fill="none"/><path d="M4.2,8.3 L6.9,10.9 L12,5.6" stroke="#5cbf68" stroke-width="1.1" fill="none"/></svg>
<svg class="b" style="left:779px;top:639px" width="17" height="17" viewBox="0 0 17 17"><path d="M3.6,5.8 V0.9 H11.6 L13.6,2.9 V5.8" stroke="#c8c8c8" stroke-width="1.7" fill="none"/><rect x="1" y="6.3" width="15" height="5.3" rx="1" stroke="#c8c8c8" stroke-width="1.7" fill="none"/><path d="M3.6,11.6 V15.2 H13.6 V11.6" stroke="#c8c8c8" stroke-width="1.7" fill="none"/><circle cx="13" cy="9" r="0.7" fill="#c8c8c8"/></svg>
<div class="t" style="left:899.40px;top:639.00px;font-size:14.53px;color:#3a3a3a;font-weight:400;transform:scaleX(0.9244);transform-origin:0 0;">$65.00</div>
<svg class="b" style="left:1005px;top:639px" width="16" height="16" viewBox="0 0 16 16"><path fill="#37474a" fill-rule="evenodd" d="M6.39,2.74 L6.92,0.78 L9.08,0.78 L9.61,2.74 L10.58,3.14 L12.34,2.13 L13.87,3.66 L12.86,5.42 L13.26,6.39 L15.22,6.92 L15.22,9.08 L13.26,9.61 L12.86,10.58 L13.87,12.34 L12.34,13.87 L10.58,12.86 L9.61,13.26 L9.08,15.22 L6.92,15.22 L6.39,13.26 L5.42,12.86 L3.66,13.87 L2.13,12.34 L3.14,10.58 L2.74,9.61 L0.78,9.08 L0.78,6.92 L2.74,6.39 L3.14,5.42 L2.13,3.66 L3.66,2.13 L5.42,3.14 Z M8,5.0 A3,3 0 1 0 8,11 A3,3 0 1 0 8,5.0 Z"/></svg>
<div class="b" style="left:233px;top:665px;width:793px;height:58px;background:#f9f9f9"></div>
<div class="t" style="left:269.50px;top:674.00px;font-size:13.95px;color:#222;font-weight:700;transform:scaleX(0.8599);transform-origin:0 0;">CSG</div>
<div class="t" style="left:317.50px;top:674.00px;font-size:13.95px;color:#222;font-weight:700;transform:scaleX(0.9352);transform-origin:0 0;">Conference</div>
<div class="t" style="left:400.40px;top:674.00px;font-size:13.95px;color:#222;font-weight:700;transform:scaleX(0.9440);transform-origin:0 0;">Package -</div>
<div class="t" style="left:466.30px;top:674.00px;font-size:13.95px;color:#363636;font-weight:400;transform:scaleX(0.9898);transform-origin:0 0;">2023-2024 Subscriptions</div>
<svg class="b" style="left:239px;top:700px" width="19" height="17" viewBox="0 0 19 17"><path d="M9.5,0.8 Q10.3,0.8 10.8,1.6 L18.4,14.6 Q19,15.9 17.6,16.2 H1.4 Q0,15.9 0.6,14.6 L8.2,1.6 Q8.7,0.8 9.5,0.8 z" fill="#e09c21"/><path d="M9.5,5 V10.5" stroke="#fff" stroke-width="2.2"/><circle cx="9.5" cy="13" r="1.2" fill="#fff"/></svg>
<div class="t" style="left:264.30px;top:701.00px;font-size:11.19px;color:#3580dc;font-weight:400;transform:scaleX(0.9703);transform-origin:0 0;">#1643</div>
<div class="t" style="left:322.00px;top:702.00px;font-size:10.90px;color:#666;font-weight:400;">//</div>
<div class="t" style="left:357.10px;top:701.00px;font-size:11.19px;color:#3580dc;font-weight:400;transform:scaleX(0.9801);transform-origin:0 0;">250 <span style='color:#555'>//</span> #8706</div>
<div class="t" style="left:481.00px;top:700.00px;font-size:14.53px;color:#3a3a3a;font-weight:400;transform:scaleX(0.8662);transform-origin:0 0;">0</div>
<div class="t" style="left:509.70px;top:700.00px;font-size:14.53px;color:#222;font-weight:400;transform:scaleX(0.9150);transform-origin:0 0;">504250ZE</div>
<div class="t" style="left:619.00px;top:700.00px;font-size:14.53px;color:#111;font-weight:700;transform:scaleX(0.8694);transform-origin:0 0;">Chris</div>
<div class="t" style="left:679.10px;top:700.00px;font-size:14.53px;color:#111;font-weight:700;transform:scaleX(0.8136);transform-origin:0 0;">Biv</div>
<svg class="b" style="left:754px;top:700px" width="17" height="17" viewBox="0 0 17 17"><circle cx="8" cy="8" r="7.4" stroke="#5cbf68" stroke-width="1.1" fill="none"/><path d="M4.2,8.3 L6.9,10.9 L12,5.6" stroke="#5cbf68" stroke-width="1.1" fill="none"/></svg>
<svg class="b" style="left:779px;top:700px" width="17" height="17" viewBox="0 0 17 17"><path d="M3.6,5.8 V0.9 H11.6 L13.6,2.9 V5.8" stroke="#e09c21" stroke-width="1.7" fill="none"/><rect x="1" y="6.3" width="15" height="5.3" rx="1" stroke="#e09c21" stroke-width="1.7" fill="none"/><path d="M3.6,11.6 V15.2 H13.6 V11.6" stroke="#e09c21" stroke-width="1.7" fill="none"/><circle cx="13" cy="9" r="0.7" fill="#e09c21"/></svg>
<div class="t" style="left:899.40px;top:700.00px;font-size:14.53px;color:#3a3a3a;font-weight:400;transform:scaleX(0.9244);transform-origin:0 0;">$50.00</div>
<svg class="b" style="left:1005px;top:700px" width="16" height="16" viewBox="0 0 16 16"><path fill="#37474a" fill-rule="evenodd" d="M6.39,2.74 L6.92,0.78 L9.08,0.78 L9.61,2.74 L10.58,3.14 L12.34,2.13 L13.87,3.66 L12.86,5.42 L13.26,6.39 L15.22,6.92 L15.22,9.08 L13.26,9.61 L12.86,10.58 L13.87,12.34 L12.34,13.87 L10.58,12.86 L9.61,13.26 L9.08,15.22 L6.92,15.22 L6.39,13.26 L5.42,12.86 L3.66,13.87 L2.13,12.34 L3.14,10.58 L2.74,9.61 L0.78,9.08 L0.78,6.92 L2.74,6.39 L3.14,5.42 L2.13,3.66 L3.66,2.13 L5.42,3.14 Z M8,5.0 A3,3 0 1 0 8,11 A3,3 0 1 0 8,5.0 Z"/></svg>
</body></html>
